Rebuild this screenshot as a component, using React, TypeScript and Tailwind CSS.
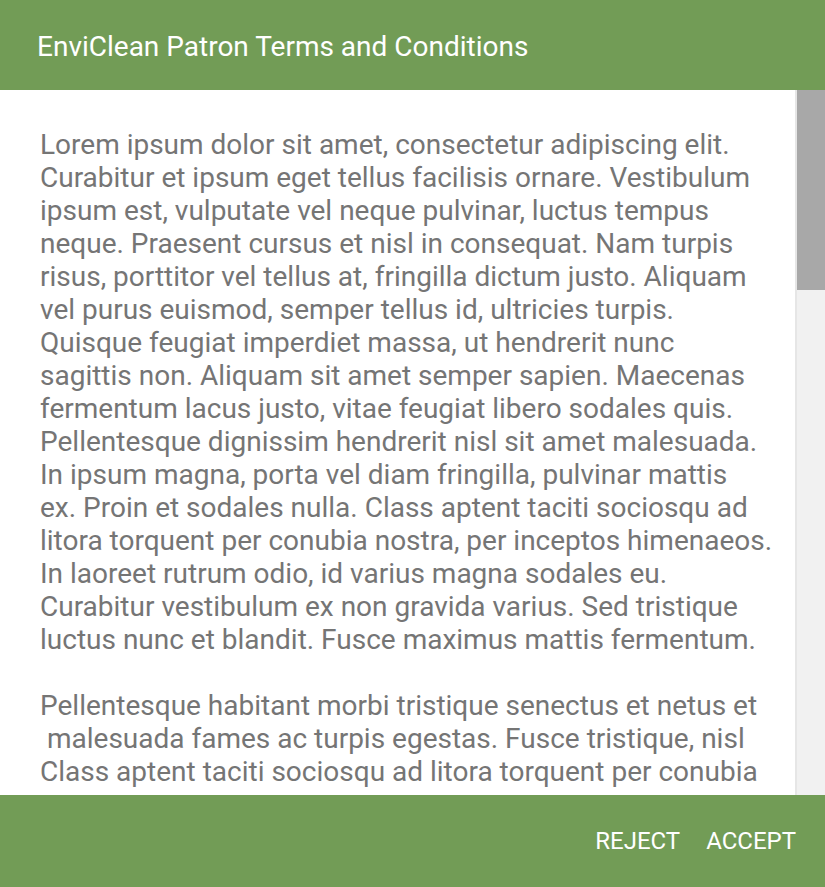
const para1 = [
  "Lorem ipsum dolor sit amet, consectetur adipiscing elit.",
  "Curabitur et ipsum eget tellus facilisis ornare. Vestibulum",
  "ipsum est, vulputate vel neque pulvinar, luctus tempus",
  "neque. Praesent cursus et nisl in consequat. Nam turpis",
  "risus, porttitor vel tellus at, fringilla dictum justo. Aliquam",
  "vel purus euismod, semper tellus id, ultricies turpis.",
  "Quisque feugiat imperdiet massa, ut hendrerit nunc",
  "sagittis non. Aliquam sit amet semper sapien. Maecenas",
  "fermentum lacus justo, vitae feugiat libero sodales quis.",
  "Pellentesque dignissim hendrerit nisl sit amet malesuada.",
  "In ipsum magna, porta vel diam fringilla, pulvinar mattis",
  "ex. Proin et sodales nulla. Class aptent taciti sociosqu ad",
  "litora torquent per conubia nostra, per inceptos himenaeos.",
  "In laoreet rutrum odio, id varius magna sodales eu.",
  "Curabitur vestibulum ex non gravida varius. Sed tristique",
  "luctus nunc et blandit. Fusce maximus mattis fermentum.",
];

const para2 = [
  "Pellentesque habitant morbi tristique senectus et netus et",
  " malesuada fames ac turpis egestas. Fusce tristique, nisl",
  "Class aptent taciti sociosqu ad litora torquent per conubia",
];

export default function App() {
  return (
    <div
      className="flex h-[887px] w-[825px] flex-col overflow-hidden bg-white"
      style={{ fontFamily: "Roboto, 'Liberation Sans', sans-serif" }}
    >
      {/* header */}
      <header className="flex h-[90px] shrink-0 items-center bg-[#729c56] pl-[37px] pt-[3px]">
        <h1 className="text-[28px] font-normal leading-[33px] text-white">
          EnviClean Patron Terms and Conditions
        </h1>
      </header>

      {/* body + fake scrollbar */}
      <div className="flex min-h-0 flex-1">
        <div className="min-w-0 flex-1 overflow-hidden pl-[40px] pt-[38px] text-[28px] leading-[33px] text-[#757575]">
          <p>
            {para1.map((l, i) => (
              <span key={i} className="block whitespace-pre">
                {l}
              </span>
            ))}
          </p>
          <p className="mt-[33px]">
            {para2.map((l, i) => (
              <span key={i} className="block whitespace-pre">
                {l}
              </span>
            ))}
          </p>
        </div>
        <div className="flex w-[30px] shrink-0 border-l-2 border-[#e6e6e6] bg-[#f1f1f1]">
          <div className="h-[200px] w-full bg-[#a8a8a8]" />
        </div>
      </div>

      {/* footer */}
      <footer className="flex h-[92px] shrink-0 items-center justify-end gap-[26px] bg-[#729c56] pr-[29px]">
        <button className="text-[24px] uppercase text-white">Reject</button>
        <button className="text-[24px] uppercase text-white">Accept</button>
      </footer>
    </div>
  );
}
